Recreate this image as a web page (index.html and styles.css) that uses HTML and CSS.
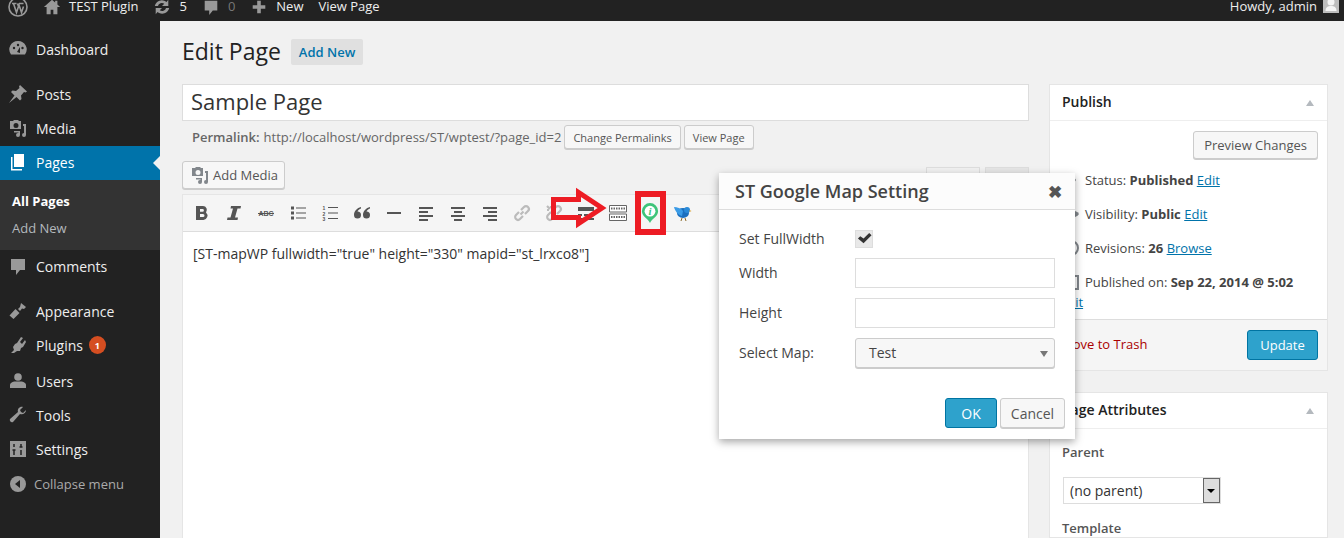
FILE: index.html
```html
<!DOCTYPE html>
<html lang="en">
<head>
  <meta charset="UTF-8">
  <title>Edit Page</title>
  <link rel="stylesheet" href="styles.css">
</head>
<body>
  <header class="adminbar">
    <div class="bar-left">
      <svg class="bar-wp" viewBox="0 0 20 20"><circle cx="10" cy="10" r="9" fill="none" stroke="#999" stroke-width="1.6"/><path d="M4 6.500h4.500M11 6.500h4.500M5.500 6.500l3 9 2-6-1-3M10.500 6.500l3 9 2-6" fill="none" stroke="#999" stroke-width="1.6"/></svg>
      <span class="bar-item"><svg class="bar-ic" viewBox="0 0 20 20"><path d="M10 2L1 10h3v8h4.500v-5h3v5H16v-8h3l-3-2.700V3h-2.500v2.100z" fill="#999"/></svg>TEST Plugin</span>
      <span class="bar-item"><svg class="bar-ic" viewBox="0 0 20 20"><path d="M2 9a8 8 0 0 1 13-4.500L17 2v7h-7l2.500-2.500A4.500 4.500 0 0 0 5.500 9zM18 11a8 8 0 0 1-13 4.500L3 18v-7h7l-2.500 2.500a4.500 4.500 0 0 0 7-2.500z" fill="#999"/></svg>5</span>
      <span class="bar-item bar-dim"><svg class="bar-ic" viewBox="0 0 20 20"><path d="M3 3h14v11h-5l-4 5v-5H3z" fill="#999"/></svg>0</span>
      <span class="bar-item"><svg class="bar-ic" viewBox="0 0 20 20"><path d="M8 3h4v5h5v4h-5v5H8v-5H3V8h5z" fill="#999"/></svg>New</span>
      <span class="bar-item">View Page</span>
    </div>
    <div class="bar-right">Howdy, admin <svg class="avatar" viewBox="0 0 16 16"><path d="M0 0h16v16H0z" fill="#bdbdbd"/><circle cx="8" cy="5" r="3.500" fill="#f4f4f4"/><path d="M2.500 14c0-4 2.500-5 5.500-5s5.500 1 5.500 5z" fill="#f4f4f4"/></svg></div>
  </header>

  <div class="wrap-all">
    <nav class="sidebar">
      <ul class="menu">
        <li class="m-dash"><svg viewBox="0 0 20 20"><path d="M10 2a8.500 8.500 0 0 0-7 13.500h14A8.500 8.500 0 0 0 10 2z" fill="#999"/><circle cx="6" cy="9" r="1.200" fill="#222"/><circle cx="10" cy="6" r="1.200" fill="#222"/><circle cx="14.500" cy="9" r="1.200" fill="#222"/><path d="M9 13l3-5 0 6z" fill="#222"/></svg>Dashboard</li>
        <li class="m-posts"><svg viewBox="0 0 20 20"><path d="M12 1l7 6.500-1.500 1-1.500-.500-3 3.500.5 3.500-1.500 1.500-3.500-3.500L1 19l5.500-7.500L3 8l1.500-1.500 3.500.5 3.500-3-.5-1.500z" fill="#999"/></svg>Posts</li>
        <li><svg viewBox="0 0 20 20"><path d="M2 3h3l1-1h4l1 1h2v8H2zM8 5a2.500 2.500 0 1 0 0 5 2.500 2.500 0 0 0 0-5z" fill="#999" fill-rule="evenodd"/><path d="M15 6h3v11a2 2 0 1 1-2-2V8h-1zM6 13h6v4a2 2 0 1 1-2-2h.500v-.500H6z" fill="#999"/></svg>Media</li>
        <li class="current"><svg viewBox="0 0 20 20"><path d="M6 2h10v13H6z" fill="#fff"/><path d="M3 5h1.500v12H14v1.500H3z" fill="#fff"/></svg>Pages</li>
        <li class="submenu">
          <a class="sub-on">All Pages</a>
          <a>Add New</a>
        </li>
        <li class="m-comments"><svg viewBox="0 0 20 20"><path d="M3 3h14v11h-5l-4 5v-5H3z" fill="#999"/></svg>Comments</li>
        <li class="m-appear"><svg viewBox="0 0 20 20"><path d="M13 2l5 4-2 2-2-.500-2 2.500-2-2 2-2zM7.500 8l4 4-6 6-4-3.500z" fill="#999"/></svg>Appearance</li>
        <li><svg viewBox="0 0 20 20"><path d="M13 2l2 1-3 4 2 2 3-4 1 2-3 5-2 1-1 3-3 0-3 2H3l3-3-1-3 2-3 2-1z" fill="#999"/></svg>Plugins<span class="count">1</span></li>
        <li class="m-users"><svg viewBox="0 0 20 20"><circle cx="10" cy="6" r="3.800" fill="#999"/><path d="M2 17v-3c0-2 3-3.500 5-3.500h6c2 0 5 1.500 5 3.500v3z" fill="#999"/></svg>Users</li>
        <li><svg viewBox="0 0 20 20"><path d="M18 5l-3 3-2-1-1-2 3-3c-3-1-6 2-5 5L2 14c-1 1.500 1 4 3 3l7-8c3 1 6-1 6-4z" fill="#999"/></svg>Tools</li>
        <li><svg viewBox="0 0 20 20"><path d="M2 2h16v16H2z" fill="#999"/><path d="M6 5v3M6 11v5M4.500 11h3M13 5v3M13 11v5M11.500 8h3" stroke="#222" stroke-width="1.500"/></svg>Settings</li>
        <li class="collapse"><svg viewBox="0 0 20 20"><circle cx="10" cy="10" r="8" fill="#999"/><path d="M12 6v8L7 10z" fill="#222"/></svg>Collapse menu</li>
      </ul>
    </nav>

    <main class="content">
      <div class="heading">
        <h1>Edit Page</h1>
        <a class="add-new">Add New</a>
      </div>
      <div class="columns">
        <div class="col-main">
          <div class="title-box">Sample Page</div>
          <div class="permalink">
            <b>Permalink:</b> <span>http://localhost/wordpress/ST/wptest/?page_id=2</span>
            <a class="btn btn-sm">Change Permalinks</a>
            <a class="btn btn-sm">View Page</a>
          </div>
          <div class="media-row">
            <a class="btn btn-media"><svg viewBox="0 0 20 20"><path d="M2 3h3l1-1h4l1 1h2v8H2zM8 5a2.500 2.500 0 1 0 0 5 2.500 2.500 0 0 0 0-5z" fill="#82878c" fill-rule="evenodd"/><path d="M15 6h3v11a2 2 0 1 1-2-2V8h-1zM6 13h6v4a2 2 0 1 1-2-2h.500v-.500H6z" fill="#82878c"/></svg>Add Media</a>
            <div class="tabs"><span class="tab"></span><span class="tab tab-b"></span></div>
          </div>
          <div class="editor">
            <div class="toolbar">
              <svg class="t-ic" viewBox="0 0 20 20"><path d="M4 3h7a4 4 0 0 1 3 6.500A4.300 4.300 0 0 1 11.500 17H4zM8 6v2.800h2.500a1.400 1.400 0 0 0 0-2.800zM8 11v3h3a1.500 1.500 0 0 0 0-3z" fill="#555" fill-rule="evenodd"/></svg>
              <svg class="t-ic" viewBox="0 0 20 20"><path d="M7 3h10l-.5 2.500h-3l-2.500 9h3l-.5 2.500H3l.5-2.500h3l2.500-9H6.500z" fill="#555"/></svg>
              <svg class="t-ic" viewBox="0 0 20 20"><text x="10" y="13" text-anchor="middle" class="abc">ABC</text><path d="M2 10.500h16" stroke="#555"/></svg>
              <svg class="t-ic" viewBox="0 0 20 20"><path d="M3 3.500h3v3H3zM3 8.500h3v3H3zM3 13.500h3v3H3z" fill="#555"/><path d="M8 5h10M8 10h10M8 15h10" stroke="#555" stroke-width="1.200"/></svg>
              <svg class="t-ic" viewBox="0 0 20 20"><path d="M8 4.500h10M8 10h10M8 15.500h10" stroke="#555" stroke-width="1.200"/><text x="4" y="7" class="num">1</text><text x="4" y="12.500" class="num">2</text><text x="4" y="18" class="num">3</text></svg>
              <svg class="t-ic" viewBox="0 0 20 20"><path d="M9 4C5 5 2 8 2 12a3.500 3.500 0 1 0 3.500-3.500C6 7 7.500 6 9 5.500zM18 4c-4 1-7 4-7 8a3.500 3.500 0 1 0 3.500-3.500C15 7 16.500 6 18 5.500z" fill="#555"/></svg>
              <svg class="t-ic" viewBox="0 0 20 20"><path d="M3 9h14v2H3z" fill="#555"/></svg>
              <svg class="t-ic" viewBox="0 0 20 20"><path d="M3 4h14v2H3zM3 8h9v2H3zM3 12h14v2H3zM3 16h9v2H3z" fill="#555"/></svg>
              <svg class="t-ic" viewBox="0 0 20 20"><path d="M3 4h14v2H3zM6 8h8v2H6zM3 12h14v2H3zM6 16h8v2H6z" fill="#555"/></svg>
              <svg class="t-ic" viewBox="0 0 20 20"><path d="M3 4h14v2H3zM8 8h9v2H8zM3 12h14v2H3zM8 16h9v2H8z" fill="#555"/></svg>
              <svg class="t-ic" viewBox="0 0 20 20"><path d="M8.500 11.500l3-3M7 9l-3 3a2.800 2.800 0 0 0 4 4l3-3M13 11l3-3a2.800 2.800 0 0 0-4-4L9 7" fill="none" stroke="#bbb" stroke-width="2.200"/></svg>
              <svg class="t-ic" viewBox="0 0 20 20"><path d="M7 9l-3 3a2.800 2.800 0 0 0 4 4l2-2M13 11l3-3a2.800 2.800 0 0 0-4-4l-2 2M3 3l3 3M3 7h2M7 3v2" fill="none" stroke="#bbb" stroke-width="2.200"/></svg>
              <svg class="t-ic" viewBox="0 0 20 20"><path d="M2 4h16v4H2z" fill="#555"/><path d="M2 11h4v2H2zM8 11h4v2H8zM14 11h4v2h-4zM2 15h16v2H2z" fill="#555"/></svg>
              <svg class="t-ic" viewBox="0 0 20 20"><path d="M1.500 2.500h17v6.500h-17zM1.500 11h17v6.500h-17z" fill="#fff" stroke="#666"/><path d="M3 5.500h14M3 14h14" stroke="#666" stroke-width="2" stroke-dasharray="1.500 1"/></svg>
              <svg class="t-ic t-pin" viewBox="0 0 20 22"><path d="M10 22C8 17 1 15 1 9a9 9 0 0 1 18 0c0 6-7 8-9 13z" fill="#3ec47a"/><circle cx="10" cy="9" r="6" fill="#fff"/><text x="10" y="13" text-anchor="middle" class="pin-i">i</text></svg>
              <svg class="t-ic t-bird" viewBox="0 0 20 20"><ellipse cx="11" cy="10" rx="6" ry="5" fill="#1b6fbe"/><circle cx="15" cy="7" r="3" fill="#2a8ad8"/><path d="M2 4c3 0 7 1 9 4l-1 5C6 12 3 8 2 4z" fill="#3a9be6"/><path d="M17.500 7l2 1-2 1z" fill="#d9a334"/><path d="M10 15l-1 3M13 15l1 3" stroke="#8a6a2a"/></svg>
            </div>
            <div class="edit-area">[ST-mapWP fullwidth="true" height="330" mapid="st_lrxco8"]</div>
          </div>
        </div>

        <aside class="col-side">
          <section class="box box-publish">
            <div class="box-head">Publish<span class="caret"></span></div>
            <div class="preview-row"><a class="btn btn-preview">Preview Changes</a></div>
            <div class="pub-row"><svg class="pub-ic" viewBox="0 0 16 16"><path d="M8 1l5 7-5 7-5-7z" fill="#82878c"/></svg>Status: <b>Published</b> <a class="lnk">Edit</a></div>
            <div class="pub-row"><svg class="pub-ic" viewBox="0 0 16 16"><path d="M0 8c3-5 13-5 16 0-3 5-13 5-16 0z" fill="#82878c"/></svg>Visibility: <b>Public</b> <a class="lnk">Edit</a></div>
            <div class="pub-row"><svg class="pub-ic" viewBox="0 0 16 16"><circle cx="8" cy="8" r="7" fill="none" stroke="#82878c" stroke-width="2"/></svg>Revisions: <b>26</b> <a class="lnk">Browse</a></div>
            <div class="pub-row pub-date"><svg class="pub-ic" viewBox="0 0 16 16"><path d="M1 2h14v13H1z" fill="none" stroke="#82878c" stroke-width="2"/></svg>Published on: <b>Sep 22, 2014 @ 5:02</b><br><a class="lnk lnk-edit">Edit</a></div>
            <div class="box-foot">
              <a class="trash">Move to Trash</a>
              <a class="btn-primary btn-update">Update</a>
            </div>
          </section>
          <section class="box box-attr">
            <div class="box-head">Page Attributes<span class="caret"></span></div>
            <div class="attr-body">
              <b class="attr-label">Parent</b>
              <div class="fake-select"><span>(no parent)</span><i class="fs-arrow"></i></div>
              <b class="attr-label attr-tpl">Template</b>
            </div>
          </section>
        </aside>
      </div>
    </main>
  </div>

  <!-- annotations pasted over the screenshot -->
  <svg class="red-arrow" viewBox="0 0 57 42"><path d="M2.500 12.500H27.500V5.500L51 21 27.500 36.500V30.500H2.500z" fill="none" stroke="#ed1c24" stroke-width="5"/></svg>
  <div class="red-box"></div>

  <div class="dialog">
    <div class="dlg-head"><span>ST Google Map Setting</span><span class="dlg-x">&#10006;</span></div>
    <div class="dlg-body">
      <div class="dlg-row"><label>Set FullWidth</label><span class="check"><svg viewBox="0 0 16 16"><path d="M1 8l2.500-2.500L7 8l6-6 2.500 2.500L7 13z" fill="#333"/></svg></span></div>
      <div class="dlg-row"><label>Width</label><span class="input"></span></div>
      <div class="dlg-row"><label>Height</label><span class="input"></span></div>
      <div class="dlg-row"><label>Select Map:</label><span class="input dlg-select">Test<i class="sel-arrow"></i></span></div>
    </div>
    <div class="dlg-foot">
      <a class="btn-primary btn-ok">OK</a>
      <a class="btn btn-cancel">Cancel</a>
    </div>
  </div>
</body>
</html>
```

FILE: styles.css
```css
* {
  box-sizing: border-box;
}
html, body {
  margin: 0;
  height: 538px;
  overflow: hidden;
}
body {
  background: #f1f1f1;
  color: #444;
  font-family: "Open Sans", sans-serif;
  font-size: 13px;
}
a {
  text-decoration: none;
}

/* top bar */
.adminbar {
  height: 21px;
  background: #222;
  color: #eee;
  display: flex;
  justify-content: space-between;
  overflow: hidden;
}
.bar-left {
  display: flex;
  align-items: center;
  height: 13px;
  line-height: 13px;
}
.bar-wp {
  width: 20px;
  height: 20px;
  margin-left: 8px;
  margin-right: 15px;
  flex: none;
}
.bar-item {
  display: flex;
  align-items: center;
  margin-right: 15px;
  white-space: nowrap;
}
.bar-dim {
  color: #777;
}
.bar-ic {
  width: 18px;
  height: 18px;
  margin-right: 8px;
}
.bar-right {
  display: flex;
  height: 13px;
  line-height: 13px;
  align-items: flex-start;
  padding-right: 5px;
}
.avatar {
  width: 16px;
  height: 16px;
  margin-left: 6px;
  margin-top: -3px;
}

/* sidebar */
.wrap-all {
  display: flex;
  height: 517px;
  overflow: hidden;
}
.sidebar {
  width: 160px;
  flex: none;
  background: #222;
}
.menu {
  list-style: none;
  margin: 0;
  padding: 12px 0 0;
}
.menu > li {
  display: flex;
  align-items: center;
  height: 34px;
  padding-bottom: 2px;
  color: #eee;
  font-size: 14px;
  position: relative;
}
.menu > li > svg {
  width: 20px;
  height: 20px;
  margin: 0 8px 0 8px;
  flex: none;
}
.menu > li.m-posts,
.menu > li.m-appear {
  margin-top: 11px;
}
.menu > li.m-users {
  margin-top: 2px;
}
.menu > li.current {
  background: #0073aa;
  color: #fff;
}
.menu > li.current::after {
  content: "";
  position: absolute;
  right: 0;
  top: 10px;
  border: 7px solid transparent;
  border-right-color: #f1f1f1;
}
.menu > li.submenu {
  display: block;
  height: 70px;
  background: #333;
  padding-top: 8px;
  font-size: 13px;
}
.submenu a {
  display: block;
  padding-left: 12px;
  line-height: 27px;
  color: #b4b9be;
}
.submenu .sub-on {
  color: #fff;
  font-weight: 700;
}
.menu > li.collapse {
  color: #aaa;
  font-size: 13px;
  margin-top: 1px;
}
.menu > li.collapse > svg {
  margin-right: 6px;
}
.count {
  width: 17px;
  height: 18px;
  margin-left: 6px;
  border-radius: 50%;
  background: #d54e21;
  color: #fff;
  font-size: 9px;
  font-weight: 700;
  display: flex;
  align-items: center;
  justify-content: center;
}

/* main */
.content {
  flex: 1;
  padding: 0 26px 0 22px;
  min-width: 0;
}
.heading {
  display: flex;
  align-items: center;
  height: 63px;
  padding-bottom: 3px;
}
.heading h1 {
  margin: 0 10px 0 0;
  font-size: 23px;
  font-weight: 400;
  color: #222;
}
.add-new {
  background: #e0e0e0;
  color: #0073aa;
  font-weight: 600;
  padding: 3px 8px;
  margin-top: 2px;
  line-height: 20px;
  border-radius: 2px;
}
.columns {
  display: flex;
  gap: 20px;
  align-items: flex-start;
}
.col-main {
  width: 847px;
  flex: none;
}
.col-side {
  width: 279px;
  flex: none;
}
.title-box {
  height: 37px;
  background: #fff;
  border: 1px solid #ddd;
  font-size: 22px;
  line-height: 33px;
  padding-left: 8px;
  color: #333;
}
.permalink {
  display: flex;
  align-items: center;
  height: 24px;
  margin-top: 4px;
  padding-left: 10px;
  font-size: 13px;
  color: #666;
  white-space: nowrap;
}
.permalink b {
  font-weight: 600;
  margin-right: 4px;
}
.btn {
  display: inline-flex;
  align-items: center;
  background: #f7f7f7;
  border: 1px solid #ccc;
  border-radius: 3px;
  box-shadow: 0 1px 0 #ccc;
  color: #555;
}
.btn-sm {
  height: 24px;
  padding: 0 8px;
  font-size: 11px;
  margin-left: 3px;
}
.media-row {
  display: flex;
  justify-content: space-between;
  align-items: flex-end;
  margin-top: 12px;
}
.btn-media {
  height: 28px;
  padding: 0 6px 0 7px;
  font-size: 13px;
}
.btn-media svg {
  width: 20px;
  height: 20px;
  margin-right: 3px;
}
.tabs {
  display: flex;
  gap: 5px;
  margin-bottom: -5px;
}
.tab {
  width: 54px;
  height: 27px;
  background: #f1f1f1;
  border: 1px solid #ddd;
  border-bottom: 0;
}
.tab-b {
  width: 44px;
  background: #e6e6e6;
}
.editor {
  margin-top: 5px;
  border: 1px solid #e5e5e5;
  height: 400px;
  background: #fff;
}
.toolbar {
  display: flex;
  align-items: center;
  height: 37px;
  background: #f5f5f5;
  border-bottom: 1px solid #ddd;
  padding-left: 9px;
}
.t-ic {
  width: 20px;
  height: 20px;
  margin-right: 12px;
  flex: none;
}
.t-pin {
  width: 18px;
  height: 20px;
  margin: 0 13px 0 1px;
}
.abc {
  font: 700 7px "Liberation Sans", sans-serif;
  fill: #555;
}
.num {
  font: 700 5px "Liberation Sans", sans-serif;
  fill: #555;
  text-anchor: middle;
}
.pin-i {
  font: italic 700 12px "Liberation Serif", serif;
  fill: #3ec47a;
}
.edit-area {
  padding: 12px 10px;
  font-size: 14px;
  color: #333;
}

/* side boxes */
.box {
  background: #fff;
  border: 1px solid #e5e5e5;
}
.box-head {
  position: relative;
  height: 36px;
  line-height: 34px;
  padding-left: 12px;
  font-size: 14px;
  font-weight: 600;
  color: #222;
  border-bottom: 1px solid #eee;
}
.caret {
  position: absolute;
  right: 13px;
  top: 15px;
  border: 4px solid transparent;
  border-top: 0;
  border-bottom: 6px solid #b4b9be;
}
.preview-row {
  display: flex;
  justify-content: flex-end;
  padding: 10px 9px 0 0;
  height: 38px;
}
.btn-preview {
  flex: none;
  height: 28px;
  padding: 0 10px;
}
.pub-row {
  height: 34px;
  padding: 12px 0 0 13px;
  line-height: 18px;
}
.pub-ic {
  width: 16px;
  height: 16px;
  margin-right: 6px;
  vertical-align: -3px;
}
.pub-row b {
  font-weight: 700;
}
.pub-date {
  height: 58px;
  line-height: 20px;
  padding-top: 11px;
}
.lnk {
  color: #0073aa;
  text-decoration: underline;
}
.lnk-edit {
  margin-left: -3px;
}
.box-foot {
  display: flex;
  justify-content: space-between;
  align-items: center;
  height: 51px;
  background: #f5f5f5;
  border-top: 1px solid #ddd;
  padding: 0 9px 0 11px;
}
.trash {
  color: #a00;
  padding-bottom: 2px;
}
.btn-primary {
  display: inline-flex;
  align-items: center;
  justify-content: center;
  background: #2ea2cc;
  border: 1px solid #0074a2;
  border-radius: 3px;
  color: #fff;
}
.btn-update {
  width: 71px;
  height: 30px;
}
.box-attr {
  margin-top: 21px;
  height: 146px;
}
.attr-body {
  padding: 14px 12px 0;
}
.attr-label {
  display: block;
  color: #555;
  font-weight: 600;
}
.fake-select {
  display: flex;
  justify-content: space-between;
  width: 158px;
  height: 27px;
  margin: 16px 0 0 1px;
  border: 1px solid #ddd;
  font-size: 14px;
  line-height: 25px;
  padding-left: 6px;
  color: #333;
}
.fs-arrow {
  position: relative;
  width: 17px;
  background: #ddd;
  border: 1px solid #666;
}
.fs-arrow::after {
  content: "";
  position: absolute;
  left: 3px;
  top: 10px;
  border: 4px solid transparent;
  border-top: 4px solid #000;
  border-bottom: 0;
}
.attr-tpl {
  margin-top: 15px;
}

/* red marks */
.red-arrow {
  position: absolute;
  left: 551px;
  top: 187px;
  width: 57px;
  height: 42px;
}
.red-box {
  position: absolute;
  left: 635px;
  top: 191px;
  width: 31px;
  height: 44px;
  border: 6px solid #ed1c24;
}

/* dialog */
.dialog {
  position: absolute;
  left: 719px;
  top: 173px;
  width: 356px;
  height: 266px;
  background: #fff;
  box-shadow: 0 3px 8px rgba(0,0,0,.35);
}
.dlg-head {
  display: flex;
  justify-content: space-between;
  align-items: center;
  height: 37px;
  background: #fcfcfc;
  border-bottom: 1px solid #ddd;
  padding: 0 13px 0 16px;
  font-size: 18px;
  font-weight: 600;
  color: #444;
}
.dlg-x {
  color: #555;
  font-size: 17px;
}
.dlg-body {
  padding: 19px 20px 0;
}
.dlg-row {
  display: flex;
  align-items: center;
  min-height: 30px;
  margin-bottom: 10px;
  font-size: 14px;
}
.dlg-row:first-child {
  min-height: 18px;
}
.dlg-row label {
  width: 116px;
  flex: none;
  padding-bottom: 2px;
}
.dlg-row:first-child label {
  padding-bottom: 0;
}
.check {
  width: 18px;
  height: 18px;
  background: #e8e8e8;
  border: 1px solid #ddd;
  display: flex;
  align-items: center;
  justify-content: center;
}
.check svg {
  width: 15px;
  height: 15px;
}
.input {
  width: 200px;
  height: 30px;
  border: 1px solid #ddd;
  background: #fff;
}
.dlg-select {
  position: relative;
  display: flex;
  align-items: center;
  padding: 0 0 2px 13px;
  background: #f7f7f7;
  border-color: #ccc;
  border-radius: 3px;
  box-shadow: 0 1px 0 #ccc;
}
.sel-arrow {
  position: absolute;
  right: 6px;
  top: 12px;
  border: 4px solid transparent;
  border-bottom: 0;
  border-top: 6px solid #777;
}
.dlg-foot {
  display: flex;
  justify-content: flex-end;
  gap: 3px;
  margin-top: 30px;
  padding-right: 10px;
  font-size: 14px;
}
.btn-ok {
  width: 52px;
  height: 30px;
}
.btn-cancel {
  width: 65px;
  height: 30px;
  justify-content: center;
}
```
